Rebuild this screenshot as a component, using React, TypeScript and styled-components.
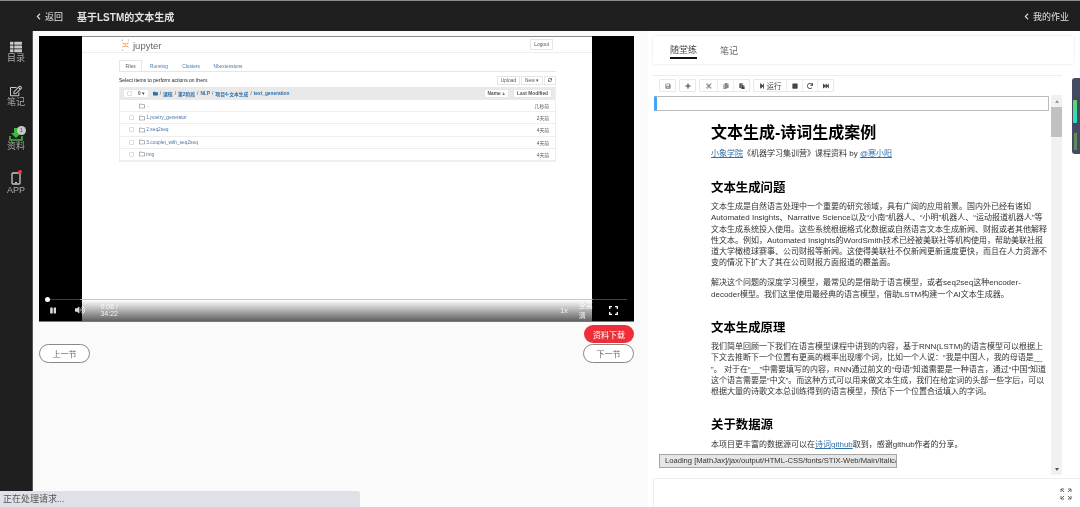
import React from "react";
import styled, { createGlobalStyle } from "styled-components";
import {
  FaThList, FaRegEdit, FaSave, FaPlus, FaCut, FaCopy, FaPaste, FaStepForward, FaStop, FaRedo,
  FaFastForward, FaPause, FaVolumeUp, FaRegFolder, FaArrowDown, FaSync, FaFolder, FaChevronLeft,
} from "react-icons/fa";

const Global = createGlobalStyle`
  html, body { margin: 0; padding: 0; background: #fff; overflow: hidden; }
  * { box-sizing: border-box; }
  body { font-family: "Liberation Sans", "Noto Sans CJK SC", sans-serif; }
`;

const Page = styled.div`
  position: relative;
  width: 1080px;
  height: 507px;
  overflow: hidden;
  display: flex;
  flex-direction: column;
  border-top: 1px solid #8a8a8a;
  filter: blur(0.3px);
`;

const TopBar = styled.header`
  height: 30px;
  flex: none;
  background: #1e1f1e;
  color: #e2e2e2;
  display: flex;
  align-items: center;
  padding: 0 11px 0 35px;
  font-size: 9px;
`;
const Back = styled.span`
  display: flex;
  align-items: center;
  gap: 3px;
  svg { width: 7px; height: 7px; }
`;
const Title = styled.strong`
  margin-left: 14px;
  font-size: 10px;
  font-weight: 700;
`;
const Homework = styled(Back)`
  margin-left: auto;
  gap: 3px;
`;

const Body = styled.div`
  flex: 1;
  display: flex;
  min-height: 0;
`;

const Sidebar = styled.nav`
  width: 33px;
  flex: none;
  background: #1e1f1e;
  border-right: 1px solid #555;
  display: flex;
  flex-direction: column;
  align-items: center;
  padding-top: 9px;
  gap: 21px;
`;
const NavItem = styled.div`
  position: relative;
  height: 23px;
  display: flex;
  flex-direction: column;
  align-items: center;
  justify-content: space-between;
  font-size: 9px;
  line-height: 10px;
  color: #a9a9a9;
  svg { display: block; }
`;
const NavIcon = styled.div`
  height: 13px;
  display: flex;
  align-items: center;
`;
const CountBadge = styled.span`
  position: absolute;
  top: -2px;
  left: 10px;
  width: 9px;
  height: 9px;
  border-radius: 50%;
  background: #c9c9c9;
  color: #555;
  font-size: 6px;
  line-height: 9px;
  text-align: center;
`;
const Dot = styled.span`
  position: absolute;
  top: -2px;
  left: 11px;
  width: 4px;
  height: 4px;
  border-radius: 50%;
  background: #ee3a3a;
`;

const Main = styled.main`
  width: 615px;
  flex: none;
  background: #fafafa;
  padding: 5px 14px 0 6px;
  display: flex;
  flex-direction: column;
`;
const MainTopFill = styled.div`
  display: flex;
  flex-direction: column;
`;

const Video = styled.div`
  position: relative;
  height: 286px;
  background: #000;
  padding: 0 42px 0 43px;
  border-bottom: 1px solid #777;
  overflow: hidden;
`;
const Screen = styled.div`
  height: 100%;
  background: #fff;
  border-top: 1px solid #8d8d8d;
  display: flex;
  flex-direction: column;
`;
const JupHeader = styled.div`
  height: 16px;
  flex: none;
  border-bottom: 1px solid #eee;
  display: flex;
  align-items: flex-start;
  justify-content: space-between;
  padding: 2px 39px 0 39px;
`;
const JupLogo = styled.div`
  display: flex;
  align-items: center;
  gap: 3px;
  font-size: 9.5px;
  line-height: 11px;
  color: #666;
`;
const SmallBtn = styled.span`
  display: inline-flex;
  align-items: center;
  justify-content: center;
  gap: 1px;
  height: ${(p: { $h?: number }) => p.$h ?? 9}px;
  padding: 0 3px;
  border: 1px solid #e6e6e6;
  background: #fff;
  color: #555;
  font-size: 4.8px;
  white-space: nowrap;
`;
const JupBody = styled.div`
  padding: 7px 36px 0 37px;
  font-size: 4.8px;
  color: #333;
`;
const JupTabs = styled.div`
  display: flex;
  height: 12px;
  border-bottom: 1px solid #e6e6e6;
  align-items: stretch;
`;
const JupTab = styled.span<{ $active?: boolean; $w: number }>`
  width: ${(p) => p.$w}px;
  display: flex;
  align-items: center;
  justify-content: center;
  color: ${(p) => (p.$active ? "#555" : "#4a78a8")};
  background: #fff;
  border: 1px solid ${(p) => (p.$active ? "#e6e6e6" : "transparent")};
  border-bottom: 0;
`;
const JupActions = styled.div`
  height: 15px;
  display: flex;
  align-items: center;
  justify-content: space-between;
  padding-top: 1px;
  color: #222;
  font-size: 5px;
`;
const BtnGroup = styled.span`
  display: inline-flex;
  gap: 1px;
`;
const FileList = styled.div`
  border: 1px solid #eee;
  border-top: 0;
`;
const FileHead = styled.div`
  height: 13px;
  background: #e9e9ea;
  display: flex;
  align-items: center;
  padding: 0 3px;
  gap: 4px;
  color: #2f6fa8;
  font-weight: 700;
`;
const Crumbs = styled.span`
  display: flex;
  align-items: center;
  gap: 2px;
  flex: 1;
`;
const Sep = styled.span`
  color: #444;
  font-weight: 400;
`;
const FileRow = styled.div`
  height: 12.2px;
  display: flex;
  align-items: center;
  border-bottom: 1px solid #eee;
  padding: 0 6px 0 9px;
  color: #4a78a8;
`;
const Check = styled.span<{ $hidden?: boolean }>`
  width: 5px;
  height: 5px;
  border: 1px solid #ddd;
  border-radius: 1px;
  margin-right: 5px;
  visibility: ${(p) => (p.$hidden ? "hidden" : "visible")};
`;
const Modified = styled.span`
  margin-left: auto;
  color: #555;
`;

const ControlsShade = styled.div`
  position: absolute;
  left: 0;
  right: 0;
  bottom: 0;
  height: 21px;
  background: linear-gradient(rgba(0, 0, 0, 0), rgba(0, 0, 0, 0.62));
`;
const Controls = styled.div`
  position: absolute;
  left: 6px;
  right: 7px;
  bottom: 0;
  height: 23px;
  color: #fff;
`;
const Progress = styled.div`
  position: absolute;
  top: 1px;
  left: 0;
  right: 0;
  height: 1px;
  background: linear-gradient(90deg, #3a3f4a 0, #3a3f4a 6%, #c4c9d8 6.2%, #c4c9d8 94%, #444 94.2%);
`;
const Thumb = styled.span`
  position: absolute;
  top: -2px;
  left: 0;
  width: 5px;
  height: 5px;
  border-radius: 50%;
  background: #fff;
`;
const ControlRow = styled.div`
  position: absolute;
  left: 0;
  right: 0;
  top: 6px;
  height: 12px;
  display: flex;
  align-items: center;
  font-size: 7px;
  color: rgba(255, 255, 255, 0.85);
  padding: 0 9px 0 5px;
`;
const CtlGap = styled.span<{ $w: number }>`
  margin-left: ${(p) => p.$w}px;
  display: flex;
  align-items: center;
`;

const Download = styled.button`
  align-self: flex-end;
  width: 50px;
  height: 18px;
  margin-top: 3px;
  border: 0;
  border-radius: 9px;
  background: #ee2f3a;
  color: #fff;
  font: 8px "Liberation Sans", "Noto Sans CJK SC", sans-serif;
  padding: 0;
`;
const Pager = styled.div`
  display: flex;
  justify-content: space-between;
  margin-top: 1px;
`;
const PagerBtn = styled.button`
  width: 51px;
  height: 19px;
  border: 1px solid #888;
  border-radius: 10px;
  background: #fff;
  color: #666;
  font: 8px "Liberation Sans", "Noto Sans CJK SC", sans-serif;
  padding: 0;
`;

const Right = styled.section`
  flex: 1;
  background: #fff;
  padding: 5px 0 0 5px;
  display: flex;
  flex-direction: column;
  min-width: 0;
`;
const TabsCard = styled.div`
  width: 421px;
  height: 28px;
  flex: none;
  box-shadow: 0 0 2px rgba(0, 0, 0, 0.12);
  display: flex;
  padding-left: 17px;
  gap: 23px;
  font-size: 9px;
`;
const Tab = styled.span<{ $active?: boolean }>`
  height: 23px;
  display: flex;
  align-items: center;
  padding-top: 6px;
  color: ${(p) => (p.$active ? "#444" : "#666")};
  border-bottom: 1px solid ${(p) => (p.$active ? "#111" : "transparent")};
  border-bottom-width: ${(p) => (p.$active ? 2 : 0)}px;
`;
const NotebookWrap = styled.div`
  width: 409px;
  margin-top: 11px;
  border-top: 1px solid #eee;
  flex: none;
`;
const Toolbar = styled.div`
  height: 19px;
  display: flex;
  align-items: flex-start;
  gap: 3px;
  padding: 3px 0 0 6px;
`;
const ToolGroup = styled.div`
  display: flex;
  height: 13px;
  border: 1px solid #e8e8e8;
  border-radius: 1px;
  color: #444;
`;
const ToolBtn = styled.span<{ $w: number; $light?: boolean }>`
  width: ${(p) => p.$w}px;
  display: flex;
  align-items: center;
  justify-content: center;
  gap: 2px;
  font-size: 7.5px;
  color: ${(p) => (p.$light ? "#888" : "#444")};
  border-left: 1px solid #eee;
  &:first-child { border-left: 0; }
  svg { width: 6px; height: 6px; }
`;
const NotebookScroll = styled.div`
  height: 380px;
  display: flex;
  background: #fff;
`;
const NotebookMain = styled.div`
  flex: 1;
  min-width: 0;
  overflow: hidden;
`;
const Cell = styled.div`
  height: 15px;
  margin-top: 1px;
  margin-left: 1px;
  border: 1px solid #bbb;
  border-left: 3px solid #42a5f5;
  border-radius: 1px;
`;
const Doc = styled.article`
  padding: 12px 0 0 58px;
  font-size: 8px;
  line-height: 11.2px;
  color: #333;
  white-space: nowrap;
`;
const H1 = styled.h1`
  margin: 0;
  font-size: 16px;
  line-height: 20px;
  color: #000;
`;
const H2 = styled.h2`
  margin: 20px 0 5.5px;
  font-size: 12.4px;
  line-height: 16px;
  color: #000;
`;
const P = styled.p<{ $top?: number }>`
  margin: ${(p) => p.$top ?? 0}px 0 0;
`;
const A = styled.a`
  color: #2f6fa8;
  text-decoration: underline;
`;
const Scrollbar = styled.div`
  width: 11px;
  flex: none;
  margin-left: 2px;
  background: #f1f1f1;
  display: flex;
  flex-direction: column;
  justify-content: space-between;
  align-items: center;
  padding: 5px 0 4px;
  position: relative;
`;
const Arrow = styled.span<{ $up?: boolean }>`
  width: 0;
  height: 0;
  border-left: 2.5px solid transparent;
  border-right: 2.5px solid transparent;
  ${(p) => (p.$up ? "border-bottom: 3px solid #999;" : "border-top: 3px solid #555;")}
`;
const ScrollThumb = styled.span`
  position: absolute;
  top: 12px;
  left: 0;
  right: 0;
  height: 30px;
  background: #c1c1c1;
`;
const Answer = styled.div`
  flex: 1;
  margin-top: 3px;
  border-top: 1px solid #eee;
  border-left: 1px solid #eee;
  display: flex;
  justify-content: flex-end;
  padding: 9px 8px 0 0;
  color: #666;
`;

const Loading = styled.div`
  position: absolute;
  left: 659px;
  top: 453px;
  width: 238px;
  height: 14px;
  background: #e6e6e6;
  border: 1px solid #a5a5a5;
  color: #333;
  font-size: 7.6px;
  line-height: 12px;
  padding-left: 5px;
  white-space: nowrap;
  overflow: hidden;
`;
const Status = styled.div`
  position: absolute;
  left: 0;
  bottom: 0;
  width: 360px;
  height: 16px;
  background: #dee1e6;
  border-top-right-radius: 3px;
  color: #555;
  font-size: 9px;
  line-height: 17px;
  padding-left: 3px;
`;
const Widget = styled.div`
  position: absolute;
  left: 1072px;
  top: 77px;
  width: 8px;
  height: 76px;
  background: #454a63;
  border-radius: 3px 0 0 3px;
  display: flex;
  flex-direction: column;
  align-items: center;
  padding: 22px 2px 0 0;
`;
const WidgetBar = styled.span`
  width: 4px;
  height: 23px;
  background: linear-gradient(#62d66a, #27dcc8);
  border-radius: 1px;
`;
const WidgetStripe = styled.span`
  width: 3px;
  height: 17px;
  margin-top: 10px;
  background: #5f8a5c;
`;

const DownloadIcon = () => (
  <svg width="14" height="13" viewBox="0 0 14 13">
    <path d="M5 0h4v5h3L7 10 2 5h3z" fill="#3fb63f" />
    <path d="M1 8v4h12V8" fill="none" stroke="#3fb63f" strokeWidth="1.6" />
  </svg>
);
const TabletIcon = () => (
  <svg width="10" height="13" viewBox="0 0 10 13">
    <rect x="1" y="1" width="8" height="11" rx="1" fill="none" stroke="#c8c8c8" strokeWidth="1.3" />
    <rect x="4" y="10" width="2" height="1" fill="#c8c8c8" />
  </svg>
);
const JupyterIcon = () => (
  <svg width="9" height="12" viewBox="0 0 9 12">
    <path d="M1 3.2C3 5 6 5 8 3.2 7 6.2 2 6.2 1 3.2zM1 8.8C3 7 6 7 8 8.8 7 5.8 2 5.8 1 8.8z" fill="#f08a3c" />
    <circle cx="1.4" cy="1.2" r=".6" fill="#888" />
    <circle cx="7.6" cy="1" r=".5" fill="#888" />
    <circle cx="1.6" cy="11" r=".6" fill="#888" />
  </svg>
);
const FullIcon = () => (
  <svg width="9" height="9" viewBox="0 0 9 9" fill="none" stroke="#fff" strokeWidth="1.3">
    <path d="M.7 3V.7H3M6 .7h2.3V3M8.3 6v2.3H6M3 8.3H.7V6" />
  </svg>
);
const ExpandIcon = () => (
  <svg width="12" height="12" viewBox="0 0 12 12" fill="none" stroke="#666" strokeWidth="1">
    <path d="M1 4V1h3M1 1l3 3M8 1h3v3M11 1L8 4M1 8v3h3M1 11l3-3M8 11h3V8M11 11L8 8" />
  </svg>
);

const files: [string, string, boolean?][] = [
  ["..", "几秒前", true],
  ["1.poetry_generator", "2天前"],
  ["2.seq2seq", "4天前"],
  ["3.couplet_with_seq2seq", "4天前"],
  ["img", "4天前"],
];

export default function App() {
  return (
    <>
      <Global />
      <Page>
        <TopBar>
          <Back><FaChevronLeft />返回</Back>
          <Title>基于LSTM的文本生成</Title>
          <Homework><FaChevronLeft />我的作业</Homework>
        </TopBar>
        <Body>
          <Sidebar>
            <NavItem><NavIcon><FaThList size={12} color="#c8c8c8" /></NavIcon>目录</NavItem>
            <NavItem><NavIcon><FaRegEdit size={12} color="#c8c8c8" /></NavIcon>笔记</NavItem>
            <NavItem><NavIcon><DownloadIcon /></NavIcon>资料<CountBadge>1</CountBadge></NavItem>
            <NavItem><NavIcon><TabletIcon /></NavIcon>APP<Dot /></NavItem>
          </Sidebar>
          <Main>
            <MainTopFill>
              <Video>
                <Screen>
                  <JupHeader>
                    <JupLogo><JupyterIcon />jupyter</JupLogo>
                    <SmallBtn $h={11}>Logout</SmallBtn>
                  </JupHeader>
                  <JupBody>
                    <JupTabs>
                      <JupTab $active $w={23}>Files</JupTab>
                      <JupTab $w={34}>Running</JupTab>
                      <JupTab $w={30}>Clusters</JupTab>
                      <JupTab $w={44}>Nbextensions</JupTab>
                    </JupTabs>
                    <JupActions>
                      Select items to perform actions on them.
                      <BtnGroup>
                        <SmallBtn>Upload</SmallBtn>
                        <SmallBtn>New ▾</SmallBtn>
                        <SmallBtn><FaSync size={4} /></SmallBtn>
                      </BtnGroup>
                    </JupActions>
                    <FileList>
                      <FileHead>
                        <SmallBtn>
                          <Check />0 <Sep>▾</Sep>
                        </SmallBtn>
                        <Crumbs>
                          <FaFolder size={5} /><Sep>/</Sep>课程<Sep>/</Sep>第2阶段<Sep>/</Sep>NLP<Sep>/</Sep>项目4-文本生成<Sep>/</Sep>text_generation
                        </Crumbs>
                        <SmallBtn>Name <FaArrowDown size={3.5} /></SmallBtn>
                        <SmallBtn>Last Modified</SmallBtn>
                      </FileHead>
                      {files.map(([name, time, noCheck]) => (
                        <FileRow key={name}>
                          <Check $hidden={noCheck} />
                          <FaRegFolder size={6} color="#777" />
                          &nbsp;{name}
                          <Modified>{time}</Modified>
                        </FileRow>
                      ))}
                    </FileList>
                  </JupBody>
                </Screen>
                <ControlsShade />
                <Controls>
                  <Progress><Thumb /></Progress>
                  <ControlRow>
                    <FaPause size={7} />
                    <CtlGap $w={19}><FaVolumeUp size={10} /></CtlGap>
                    <CtlGap $w={15}>0:06 / 34:22</CtlGap>
                    <CtlGap $w={426}>1x</CtlGap>
                    <CtlGap $w={11}>全高清</CtlGap>
                    <CtlGap $w={11}><FullIcon /></CtlGap>
                  </ControlRow>
                </Controls>
              </Video>
              <Download>资料下载</Download>
              <Pager>
                <PagerBtn>上一节</PagerBtn>
                <PagerBtn>下一节</PagerBtn>
              </Pager>
            </MainTopFill>
          </Main>
          <Right>
            <TabsCard>
              <Tab $active>随堂练</Tab>
              <Tab>笔记</Tab>
            </TabsCard>
            <NotebookWrap>
              <Toolbar>
                <ToolGroup><ToolBtn $w={15} $light><FaSave /></ToolBtn></ToolGroup>
                <ToolGroup><ToolBtn $w={15}><FaPlus /></ToolBtn></ToolGroup>
                <ToolGroup>
                  <ToolBtn $w={17} $light><FaCut /></ToolBtn>
                  <ToolBtn $w={16} $light><FaCopy /></ToolBtn>
                  <ToolBtn $w={16}><FaPaste /></ToolBtn>
                </ToolGroup>
                <ToolGroup>
                  <ToolBtn $w={32}><FaStepForward />运行</ToolBtn>
                  <ToolBtn $w={16}><FaStop /></ToolBtn>
                  <ToolBtn $w={15}><FaRedo /></ToolBtn>
                  <ToolBtn $w={16}><FaFastForward /></ToolBtn>
                </ToolGroup>
              </Toolbar>
              <NotebookScroll>
                <NotebookMain>
                  <Cell />
                  <Doc>
                    <H1>文本生成-诗词生成案例</H1>
                    <P $top={5.4}><A>小象学院</A>《机器学习集训营》课程资料 by <A>@寒小阳</A></P>
                    <H2>文本生成问题</H2>
                    <P>
                      文本生成是自然语言处理中一个重要的研究领域，具有广阔的应用前景。国内外已经有诸如<br />
                      Automated Insights、Narrative Science以及“小南”机器人、“小明”机器人、“运动报道机器人”等<br />
                      文本生成系统投入使用。这些系统根据格式化数据或自然语言文本生成新闻、财报或者其他解释<br />
                      性文本。例如，Automated Insights的WordSmith技术已经被美联社等机构使用，帮助美联社报<br />
                      道大学橄榄球赛事、公司财报等新闻。这使得美联社不仅新闻更新速度更快，而且在人力资源不<br />
                      变的情况下扩大了其在公司财报方面报道的覆盖面。
                    </P>
                    <P $top={9}>
                      解决这个问题的深度学习模型，最常见的是借助于语言模型，或者seq2seq这种encoder-<br />
                      decoder模型。我们这里使用最经典的语言模型，借助LSTM构建一个AI文本生成器。
                    </P>
                    <H2>文本生成原理</H2>
                    <P>
                      我们简单回顾一下我们在语言模型课程中讲到的内容，基于RNN(LSTM)的语言模型可以根据上<br />
                      下文去推断下一个位置有更高的概率出现哪个词，比如一个人说：“我是中国人，我的母语是__<br />
                      ”。 对于在“__”中需要填写的内容，RNN通过前文的“母语”知道需要是一种语言，通过“中国”知道<br />
                      这个语言需要是“中文”。而这种方式可以用来做文本生成，我们在给定词的头部一些字后，可以<br />
                      根据大量的诗歌文本总训练得到的语言模型，预估下一个位置合适填入的字词。
                    </P>
                    <H2>关于数据源</H2>
                    <P>本项目更丰富的数据源可以在<A>诗词github</A>取到，感谢github作者的分享。</P>
                  </Doc>
                </NotebookMain>
                <Scrollbar>
                  <Arrow $up />
                  <ScrollThumb />
                  <Arrow />
                </Scrollbar>
              </NotebookScroll>
            </NotebookWrap>
            <Answer><ExpandIcon /></Answer>
          </Right>
        </Body>
        <Loading>Loading [MathJax]/jax/output/HTML-CSS/fonts/STIX-Web/Main/Italic/Main.js</Loading>
        <Status>正在处理请求...</Status>
        <Widget>
          <WidgetBar />
          <WidgetStripe />
        </Widget>
      </Page>
    </>
  );
}
